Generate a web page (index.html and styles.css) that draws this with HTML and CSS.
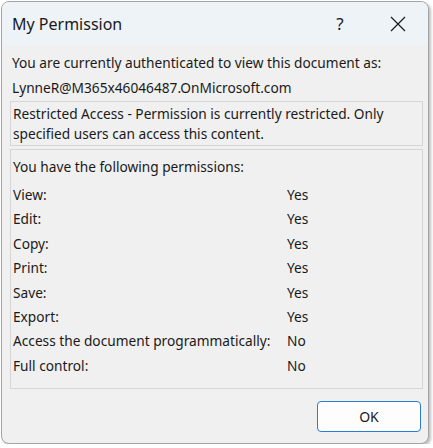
FILE: index.html
```html
<!DOCTYPE html>
<html>

<head>
    <title>My Permission</title>
    <link rel="stylesheet" href="styles.css">
</head>

<body>
    <div class="window">
        <div class="titlebar">
            <div class="title">My Permission</div>
            <div class="title-btn help">?</div>
            <div class="title-btn close">
                <svg width="16" height="16" viewBox="0 0 16 16">
                    <path d="M1 1 L15 15 M15 1 L1 15" stroke="#1a1a1a" stroke-width="1.2" fill="none" />
                </svg>
            </div>
        </div>

        <div class="content">
            <div class="line">You are currently authenticated to view this document as:</div>
            <div class="line">LynneR@M365x46046487.OnMicrosoft.com</div>

            <div class="box notice">
                Restricted Access - Permission is currently restricted. Only specified users can access this content.
            </div>

            <div class="box perms">
                <div class="perms-head">You have the following permissions:</div>
                <div class="perm-row"><span class="perm-name">View:</span><span>Yes</span></div>
                <div class="perm-row"><span class="perm-name">Edit:</span><span>Yes</span></div>
                <div class="perm-row"><span class="perm-name">Copy:</span><span>Yes</span></div>
                <div class="perm-row"><span class="perm-name">Print:</span><span>Yes</span></div>
                <div class="perm-row"><span class="perm-name">Save:</span><span>Yes</span></div>
                <div class="perm-row"><span class="perm-name">Export:</span><span>Yes</span></div>
                <div class="perm-row"><span class="perm-name">Access the document programmatically:</span><span>No</span></div>
                <div class="perm-row"><span class="perm-name">Full control:</span><span>No</span></div>
            </div>

            <div class="actions">
                <button class="ok">OK</button>
            </div>
        </div>
    </div>
</body>

</html>
```

FILE: styles.css
```css
body {
    margin: 0;
    background: #ffffff;
    font-family: "Noto Sans", "Open Sans", sans-serif;
    color: #1a1a1a;
}

.window {
    margin: 1px 0 0 1px;
    width: 426px;
    height: 441px;
    border: 1px solid #a3a3a3;
    border-radius: 8px;
    background: #f0f0f0;
    box-shadow: 2px 2px 3px rgba(0, 0, 0, 0.25);
    overflow: hidden;
    display: flex;
    flex-direction: column;
}

.titlebar {
    height: 43px;
    flex: none;
    background: #eef3f8;
    display: flex;
    align-items: center;
    padding-left: 10px;
}

.title {
    flex: 1;
    font-size: 16px;
}

.title-btn {
    display: flex;
    align-items: center;
    justify-content: center;
}

.help {
    width: 24px;
    font-size: 17px;
    margin-right: 38px;
}

.close {
    width: 16px;
    margin-right: 22px;
}

.content {
    padding: 5px 5px 0 8px;
    font-size: 13.7px;
}

.line {
    height: 25px;
    line-height: 25px;
    padding-left: 2px;
}

.box {
    border: 1px solid #d6d6d6;
}

.notice {
    margin-top: 1px;
    padding: 2px 2px 1px 2px;
    line-height: 20px;
}

.perms {
    margin-top: 3px;
    height: 240px;
    box-sizing: border-box;
    padding: 5px 2px 0 2px;
}

.perms-head {
    height: 24px;
    line-height: 24px;
    margin-bottom: 4px;
}

.perm-row {
    display: flex;
    height: 24.4px;
    line-height: 24.4px;
}

.perm-name {
    width: 274px;
}

.actions {
    display: flex;
    justify-content: flex-end;
    margin-top: 12px;
}

.ok {
    width: 104px;
    height: 31px;
    background: #fdfdfd;
    border: 1px solid #2b7cd3;
    border-radius: 4px;
    font-family: inherit;
    font-size: 14px;
    color: #1a1a1a;
    margin-right: 2px;
}
```
